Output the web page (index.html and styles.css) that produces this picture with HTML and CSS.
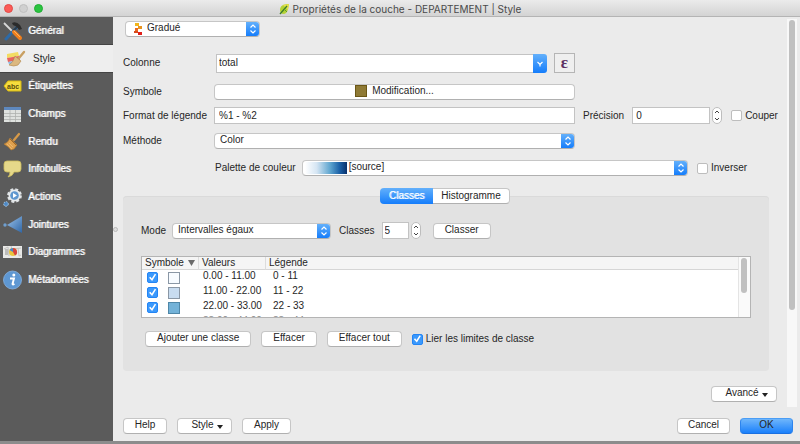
FILE: index.html
```html
<!DOCTYPE html>
<html lang="fr">
<head>
<meta charset="utf-8">
<title>Propriétés de la couche - DEPARTEMENT | Style</title>
<link rel="stylesheet" href="styles.css">
</head>
<body>
<header class="titlebar">
  <div class="lights"><span class="light close"></span><span class="light minimise"></span><span class="light expand"></span></div>
  <h1 class="title">
    <svg width="11" height="12" viewBox="0 0 11 12"><path d="M1 7C1 3 4 1 10 1 9 6 9 10 5 11 2 11 1 9 1 7Z" fill="#b5d334"/><path d="M4 2 10 1 9 7Z" fill="#e6e04a"/><path d="M1 11 8 3" stroke="#3b7d2b" stroke-width="1.3"/><path d="M5 6 8 9" stroke="#5d9b2c"/></svg>
    Propriétés de la couche - DEPARTEMENT | Style
  </h1>
</header>
<div class="body">
  <nav class="sidebar">
    <a class="item" href="#general"><svg width="20" height="20" viewBox="0 0 20 20"><path d="M1 2 10 11" stroke="#d8d8d8" stroke-width="1.8"/><path d="M15 5 3 18" stroke="#2c6aa8" stroke-width="3" stroke-linecap="round"/><path d="M15 5 10 10" stroke="#2e3a45" stroke-width="2"/><path d="M9 2Q13 0 17 4L19 8 16 9 14 6 10 4Z" fill="#2b2b2b"/><path d="M11 11 17 17" stroke="#f07f1c" stroke-width="4" stroke-linecap="round"/><path d="M11 10 17 16" stroke="#ffb35f"/></svg>Général</a>
    <a class="item selected" href="#style"><svg width="20" height="20" viewBox="0 0 20 20"><path d="M1 5 12 3 13 7 1 9Z" fill="#f3dc62"/><path d="M1 9 13 7 14 11 2 13Z" fill="#e8635e"/><path d="M2 13 14 11 13 15 3 15Z" fill="#8dbce5"/><path d="M18 3 13 9" stroke="#c9a063" stroke-width="2.4" stroke-linecap="round"/><path d="M9 7 15 12 12 16Q8 18 3 16 7 14 9 7Z" fill="#dcb880" stroke="#b08748" stroke-width=".6"/></svg>Style</a>
    <a class="item" href="#labels"><svg width="20" height="20" viewBox="0 0 20 20"><path d="M1 10 5 5H18V15H5Z" fill="#f6dd3d" stroke="#d7b913"/><text x="4" y="13" class="abc">abc</text></svg>Étiquettes</a>
    <a class="item" href="#fields"><svg width="20" height="20" viewBox="0 0 20 20"><path d="M1 3H18V18H1Z" fill="#dfe2df"/><path d="M1 3H18V6H1Z" fill="#5e88bd"/><path d="M1 9.500H18M1 12.500H18M1 15.500H18M7 6V18M12.500 6V18" stroke="#aeb3ae" stroke-width=".8"/></svg>Champs</a>
    <a class="item" href="#rendering"><svg width="20" height="20" viewBox="0 0 20 20"><path d="M16 2 11 8" stroke="#d79a48" stroke-width="2.2" stroke-linecap="round"/><path d="M7 6 14 13 11 17 8 18Q5 14 1 12 5 11 7 6Z" fill="#dfa04d" stroke="#b67a2b" stroke-width=".6"/><path d="M7 7 13 13" stroke="#8f5a20" stroke-width=".8"/><path d="M4 12 9 17M6 11 10 15" stroke="#f0c17c" stroke-width=".7"/></svg>Rendu</a>
    <a class="item" href="#display"><svg width="20" height="20" viewBox="0 0 20 20"><path d="M4 2H15Q18 2 18 5V10Q18 13 15 13H11Q10 17 5 18 7 16 7 13H4Q1 13 1 10V5Q1 2 4 2Z" fill="#e5d88a" stroke="#cdbd5e" stroke-width=".8"/></svg>Infobulles</a>
    <a class="item" href="#actions"><svg width="20" height="20" viewBox="0 0 20 20"><circle cx="11.500" cy="8.500" r="6.300" fill="none" stroke="#dfe3e6" stroke-width="2.200" stroke-dasharray="2.900 2.050"/><circle cx="11.500" cy="8.500" r="6" fill="#e8ebed"/><circle cx="11.500" cy="8.500" r="4.300" fill="#5f97cf"/><path d="M10 6V11L14 8.500Z" fill="#fff"/><circle cx="3" cy="17" r="2.300" fill="#4d88c4" stroke="#a8c6e2" stroke-width="1" stroke-dasharray="1.600 .8"/></svg>Actions</a>
    <a class="item" href="#joins"><svg width="20" height="20" viewBox="0 0 20 20"><defs><linearGradient id="join" x1="0" x2="1" y1="0" y2="1"><stop offset="0" stop-color="#9cc3ea"/><stop offset="1" stop-color="#2f66a6"/></linearGradient></defs><path d="M4 10 19 1V18Z" fill="url(#join)"/><circle cx="2" cy="10" r="1.700" fill="#6f9fd0"/></svg>Jointures</a>
    <a class="item" href="#diagrams"><svg width="20" height="20" viewBox="0 0 20 20"><path d="M0 4H19V16H0Z" fill="#e9e9e7"/><path d="M1 7 5 5 6 14M8 4 9 7 18 6M15 6 16 14 18 13" stroke="#c3c3c0" fill="none"/><path d="M2 7H5V13H2Z" fill="#bcbcba"/><circle cx="10" cy="10" r="4" fill="#e9c53c"/><path d="M10 10 10 6A4 4 0 0 1 12 13.500Z" fill="#d6453e"/><path d="M10 10 6.500 8A4 4 0 0 1 10 6Z" fill="#4a86c8"/></svg>Diagrammes</a>
    <a class="item" href="#metadata"><svg width="20" height="20" viewBox="0 0 20 20"><circle cx="9.500" cy="10" r="9" fill="#5e97d2" stroke="#86b3e2" stroke-width=".8"/><circle cx="10.800" cy="5" r="1.500" fill="#fff"/><path d="M7 8.500H11L9.500 14Q9.500 15 11.500 14" fill="none" stroke="#fff" stroke-width="1.900"/></svg>Métadonnées</a>
  </nav>
  <div class="splitter"><span></span></div>
  <main class="main">
    <div class="scroll">
      <form class="form">
        <div class="picker renderer">
          <svg class="graded" width="9" height="12" viewBox="0 0 9 12"><path d="M1 0H5V3H1Z" fill="#f1b51c"/><path d="M4 3H8V6H4Z" fill="#e8931f"/><path d="M1 5H4V8H1Z" fill="#ea6a1d"/><path d="M0 8H4V10H0Z" fill="#d94b1c"/><path d="M4 9H8V12H4Z" fill="#e0201b"/></svg>
          <select aria-label="Type de rendu"><option>Gradué</option></select>
          <span class="cap"><svg width="8" height="10" viewBox="0 0 8 10"><path d="M1.500 3.500 4 1 6.500 3.500M1.500 6.500 4 9 6.500 6.500"/></svg></span>
        </div>
        <div class="row column-row">
          <label for="column">Colonne</label>
          <div class="combo">
            <input id="column" type="text" value="total">
            <button class="cap" type="button" aria-label="Colonnes"><svg width="8" height="10" viewBox="0 0 8 10"><path d="M1.500 4 4 6.500 6.500 4M4 6.500V8.500"/></svg></button>
          </div>
          <button class="epsilon" type="button">ε</button>
        </div>
        <div class="row symbol-row">
          <label for="symbol">Symbole</label>
          <button class="button" id="symbol" type="button"><span class="swatch olive"></span>Modification...</button>
        </div>
        <div class="row format-row">
          <label for="format">Format de légende</label>
          <input class="field" id="format" type="text" value="%1 - %2">
          <div class="precision">
            <label for="precision">Précision</label>
            <input class="field" id="precision" type="text" value="0">
            <span class="stepper"><button type="button" aria-label="Plus"><svg width="6" height="4" viewBox="0 0 6 4"><path d="M1 3 3 1 5 3"/></svg></button><button type="button" aria-label="Moins"><svg width="6" height="4" viewBox="0 0 6 4"><path d="M1 1 3 3 5 1"/></svg></button></span>
            <label class="check"><input type="checkbox">Couper</label>
          </div>
        </div>
        <div class="row method-row">
          <label for="method">Méthode</label>
          <div class="picker">
            <select id="method"><option>Color</option></select>
            <span class="cap"><svg width="8" height="10" viewBox="0 0 8 10"><path d="M1.500 3.500 4 1 6.500 3.500M1.500 6.500 4 9 6.500 6.500"/></svg></span>
          </div>
        </div>
        <div class="palette-row">
          <label for="palette">Palette de couleur</label>
          <div class="picker palette">
            <span class="ramp"></span>
            <select id="palette"><option>[source]</option></select>
            <span class="cap"><svg width="8" height="10" viewBox="0 0 8 10"><path d="M1.500 3.500 4 1 6.500 3.500M1.500 6.500 4 9 6.500 6.500"/></svg></span>
          </div>
          <label class="check"><input type="checkbox">Inverser</label>
        </div>
        <div class="tabs"><button class="tab active" type="button">Classes</button><button class="tab" type="button">Histogramme</button></div>
        <section class="panel">
          <div class="mode-row">
            <label for="mode">Mode</label>
            <div class="picker mode">
              <select id="mode"><option>Intervalles égaux</option></select>
              <span class="cap"><svg width="8" height="10" viewBox="0 0 8 10"><path d="M1.500 3.500 4 1 6.500 3.500M1.500 6.500 4 9 6.500 6.500"/></svg></span>
            </div>
            <label for="count">Classes</label>
            <input class="field count" id="count" type="text" value="5">
            <span class="stepper"><button type="button" aria-label="Plus"><svg width="6" height="4" viewBox="0 0 6 4"><path d="M1 3 3 1 5 3"/></svg></button><button type="button" aria-label="Moins"><svg width="6" height="4" viewBox="0 0 6 4"><path d="M1 1 3 3 5 1"/></svg></button></span>
            <button class="button classify" type="button">Classer</button>
          </div>
          <div class="table-box">
            <table class="classes">
              <thead><tr><th class="c-symbol">Symbole <svg width="7" height="7" viewBox="0 0 7 7"><path d="M0 1H7L3.500 7Z" fill="#6b6b6b"/></svg></th><th class="c-values">Valeurs</th><th>Légende</th></tr></thead>
              <tbody>
                <tr><td><div class="sym"><input type="checkbox" checked aria-label="0 - 11"><span class="swatch s1"></span></div></td><td>0.00 - 11.00</td><td>0 - 11</td></tr>
                <tr><td><div class="sym"><input type="checkbox" checked aria-label="11 - 22"><span class="swatch s2"></span></div></td><td>11.00 - 22.00</td><td>11 - 22</td></tr>
                <tr><td><div class="sym"><input type="checkbox" checked aria-label="22 - 33"><span class="swatch s3"></span></div></td><td>22.00 - 33.00</td><td>22 - 33</td></tr>
                <tr class="next"><td></td><td>33.00 - 44.00</td><td>33 - 44</td></tr>
              </tbody>
            </table>
            <div class="table-track"><span></span></div>
          </div>
          <div class="actions">
            <button class="button" type="button">Ajouter une classe</button>
            <button class="button" type="button">Effacer</button>
            <button class="button" type="button">Effacer tout</button>
            <label class="check"><input type="checkbox" checked>Lier les limites de classe</label>
          </div>
        </section>
        <button class="button advanced" type="button">Avancé<svg class="caret" width="6" height="4" viewBox="0 0 6 4"><path d="M0 0H6L3 4Z"/></svg></button>
      </form>
      <div class="track"><span></span></div>
    </div>
    <footer class="footer">
      <button class="button help" type="button">Help</button>
      <button class="button style" type="button">Style<svg class="caret" width="6" height="4" viewBox="0 0 6 4"><path d="M0 0H6L3 4Z"/></svg></button>
      <button class="button apply" type="button">Apply</button>
      <button class="button cancel" type="button">Cancel</button>
      <button class="button primary" type="button">OK</button>
    </footer>
  </main>
</div>
</body>
</html>
```
FILE: styles.css
```css
* { box-sizing: border-box; }

body {
  margin: 0;
  min-height: 100vh;
  display: flex;
  flex-direction: column;
  background: #ebebeb;
  border-bottom: 3px solid #8c8c8c;
  color: #262626;
  font: 10px/12px "Liberation Sans", Arial, sans-serif;
}

button, input, select { font: inherit; color: inherit; margin: 0; }
svg { flex: none; }

.titlebar {
  display: grid;
  grid-template-columns: 50px 1fr 50px;
  align-items: center;
  height: 17px;
  background: linear-gradient(#ebebeb, #d3d3d3);
  border-bottom: 1px solid #b4b4b4;
}
.lights { display: flex; gap: 6px; padding-left: 4px; }
.light { width: 9px; height: 9px; border-radius: 50%; }
.close { background: #fc5b57; border: 1px solid #e24a46; }
.minimise { background: #d0d0d0; border: 1px solid #bfbfbf; }
.expand { background: #2ac440; border: 1px solid #1fad33; }
.title {
  display: flex;
  align-items: center;
  justify-content: center;
  gap: 3px;
  margin: 0;
  padding-top: 1px;
  color: #4a4a4a;
  font: 10px/14px Inter, sans-serif;
  white-space: nowrap;
}

.body { flex: 1; display: flex; }

.sidebar {
  width: 113px;
  flex: none;
  background: #5b5b5b;
  display: grid;
  grid-template-rows: repeat(10, 1fr);
  align-self: stretch;
  padding-bottom: 147px;
}
.item {
  display: flex;
  align-items: center;
  gap: 5px;
  padding-left: 3px;
  color: #fff;
  text-decoration: none;
  text-shadow: 1px 0 0 rgba(255, 255, 255, .7);
}
.item.selected {
  padding-left: 6px;
  gap: 7px;
  background: #eeeeee;
  color: #262626;
  text-shadow: none;
  box-shadow: 0 -1px #444, 0 1px #444;
}
.abc { font: bold 7px "Liberation Sans", sans-serif; fill: #5a4d0c; text-shadow: none; }

.splitter { width: 5px; display: flex; align-items: center; }
.splitter span { width: 5px; height: 5px; border: 1px solid #b9b9b9; border-radius: 50%; background: #dedede; }

.main { flex: 1; min-width: 0; display: flex; flex-direction: column; }
.scroll { flex: 1; display: flex; padding-right: 3px; }
.form { flex: 1; min-width: 0; padding: 4px 10px 5px 5px; }
.track { width: 10px; margin-top: 2px; padding: 1px 2px; background: #f8f8f8; }
.track span { display: block; height: 75%; border-radius: 3px; background: #c0c0c0; }

.row {
  display: grid;
  grid-template-columns: 91px minmax(0, 1fr) 202px;
  align-items: center;
}
.button, .picker {
  height: 16px;
  border: 1px solid #c6c6c6;
  border-bottom-color: #b0b0b0;
  border-radius: 4px;
  background: #fff;
}
.button {
  display: flex;
  align-items: center;
  justify-content: center;
  padding: 0 11px 2px;
  white-space: nowrap;
}
.picker { display: flex; align-items: center; overflow: hidden; }
.picker select {
  flex: 1;
  min-width: 0;
  appearance: none;
  border: 0;
  outline: 0;
  background: none;
  padding: 0 0 2px 5px;
}
.cap {
  width: 13px;
  align-self: stretch;
  flex: none;
  display: flex;
  align-items: center;
  justify-content: center;
  border: 0;
  padding: 0;
  background: linear-gradient(#63b0fb, #157dfb);
}
.cap path { fill: none; stroke: #fff; stroke-width: 1.2; }
.field {
  width: 100%;
  height: 17px;
  border: 1px solid #c3c3c3;
  background: #fff;
  padding: 0 4px 1px;
}

.renderer { width: 135px; margin-left: 2px; }
.graded { margin-left: 8px; }
.renderer select { padding-left: 4px; }

.column-row { margin-top: 16px; }
.combo { display: flex; align-items: center; padding-left: 2px; margin-right: 28px; }
.combo input { flex: 1; min-width: 0; height: 19px; border: 1px solid #c3c3c3; border-right: 0; background: #fff; padding: 0 2px 1px; }
.combo .cap { width: 14px; height: 19px; align-self: center; border-radius: 0 3px 3px 0; }
.epsilon {
  width: 21px;
  height: 20px;
  margin-left: -21px;
  padding: 0 0 2px;
  border: 1px solid #b5b5b5;
  background: #efefef;
  color: #5c2f63;
  font: bold 17px/15px "Liberation Serif", serif;
}

.symbol-row { margin-top: 11px; }
.format-row { margin-top: 7px; }
.precision { display: flex; align-items: center; padding-left: 8px; }
.precision .field { width: 78px; margin-left: 8px; padding-left: 3px; }
.stepper {
  width: 10px;
  height: 17px;
  margin-left: 2px;
  flex: none;
  display: flex;
  flex-direction: column;
  border: 1px solid #bdbdbd;
  border-radius: 5px;
  background: #fff;
}
.stepper button { flex: 1; display: flex; align-items: center; justify-content: center; border: 0; padding: 0; background: none; }
.stepper path { fill: none; stroke: #444; stroke-width: 1; }

.check { display: flex; align-items: center; gap: 3px; white-space: nowrap; }
.precision .check { margin-left: 9px; }
input[type="checkbox"] {
  appearance: none;
  flex: none;
  width: 11px;
  height: 11px;
  border: 1px solid #bdbdbd;
  border-radius: 2px;
  background: #fff;
}
input[type="checkbox"]:checked { border-color: #2385f5; background: #3b99fc; }
input[type="checkbox"]:checked::after {
  content: "";
  display: block;
  width: 9px;
  height: 9px;
  background: #fff;
  clip-path: polygon(12% 52%, 26% 42%, 42% 62%, 76% 8%, 90% 18%, 46% 88%);
}

.method-row { margin-top: 9px; }
.palette-row { display: flex; align-items: center; margin-top: 11px; padding-left: 92px; }
.palette { flex: 1; margin: 0 9px 0 6px; }
.palette-row .check { width: 80px; }
.ramp {
  width: 42px;
  height: 12px;
  margin-left: 2px;
  background: linear-gradient(90deg, #fff, #d5e5f3 28%, #5ea5cf 60%, #1c62a8 82%, #08306b);
}
.palette select { padding-left: 2px; }

.tabs { position: relative; display: flex; justify-content: center; margin: 12px 10px 0 0; }
.tab {
  height: 16px;
  width: 77px;
  padding: 0 0 1px;
  border: 1px solid #c6c6c6;
  border-bottom-color: #b0b0b0;
  border-left: 0;
  border-radius: 0 4px 4px 0;
  background: #fff;
}
.tab.active {
  width: 53px;
  border: 0;
  border-radius: 4px 0 0 4px;
  background: linear-gradient(#63b0fb, #157dfb);
  color: #fff;
  text-shadow: 1px 0 0 rgba(255, 255, 255, .7);
}
.panel {
  margin: -8px 8px 0 0;
  padding: 26px 18px 24px;
  border-radius: 4px;
  background: #e2e2e2;
  box-shadow: inset 0 1px #dadada;
}
.mode-row { display: flex; align-items: center; }
.mode { width: 159px; margin: 0 8px 0 6px; }
.count { width: 27px; height: 17px; margin-left: 7px; }
.field.count { padding: 0 2px 1px; }
.classify { width: 58px; margin-left: 12px; }

.table-box { display: flex; height: 62px; margin-top: 17px; overflow: hidden; border: 1px solid #b4b4b4; background: #fff; }
.classes { flex: 1; align-self: flex-start; table-layout: fixed; border-collapse: separate; border-spacing: 0; }
.classes th {
  height: 13px;
  padding: 0 3px;
  background: #f5f5f5;
  border-bottom: 1px solid #d6d6d6;
  border-right: 1px solid #dcdcdc;
  font-weight: normal;
  text-align: left;
  line-height: 12px;
}
.classes th:last-child { border-right: 0; }
.classes th svg { margin-left: 1px; }
.c-symbol { width: 57px; }
.c-values { width: 67px; }
.classes td { height: 15px; padding: 0 0 4px 4px; line-height: 11px; }
.classes td:first-child { padding: 0 0 0 5px; }
.classes td:last-child { padding-left: 7px; }
.classes .next { color: #8a8a8a; }
.sym { display: flex; align-items: center; gap: 10px; }
.swatch { width: 12px; height: 12px; flex: none; border: 1px solid #8a97a5; }
.olive { margin-right: 5px; background: #8f7a35; border-color: #6b5716; }
.s1 { background: #f7fbff; }
.s2 { background: #c8dcf0; }
.s3 { background: #73b2d8; border-color: #4f87a8; }
.table-track { width: 12px; padding: 1px 3px 1px 2px; background: #fafafa; border-left: 1px solid #e4e4e4; }
.table-track span { display: block; height: 35px; border-radius: 3px; background: #c0c0c0; }

.actions { display: flex; align-items: center; gap: 10px; margin-top: 13px; padding-left: 4px; }
.advanced { width: 66px; margin: 15px 0 0 auto; padding: 0 5px 2px 10px; }
.caret { margin: 3px 0 0 3px; fill: #222; }

.footer { display: flex; gap: 10px; padding: 11px 7px 7px 5px; }
.help { width: 44px; }
.style { width: 55px; padding: 0 5px 2px 10px; }
.apply { width: 49px; }
.cancel { width: 53px; margin-left: auto; }
.primary { width: 53px; border-color: #4a9df5 #2c84ee #1a70e0; background: linear-gradient(#6fb6fb, #1a80fb); }
```
